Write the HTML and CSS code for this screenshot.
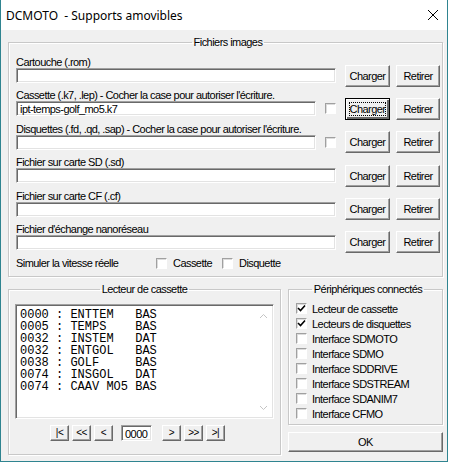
FILE: index.html
```html
<html>

<head>
    <link rel="stylesheet" href="styles.css">
</head>

<body>

    <div class="window">
        <div class="titlebar">
            <span class="title">DCMOTO&nbsp; - Supports amovibles</span>
            <svg class="close" width="12" height="12" viewBox="0 0 12 12">
                <path d="M1 1 L11 11 M11 1 L1 11" stroke="#000" stroke-width="1" fill="none" />
            </svg>
        </div>

        <div class="client">

            <fieldset class="group files">
                <legend>Fichiers images</legend>

                <div class="file-row">
                    <div class="label">Cartouche (.rom)</div>
                    <div class="fields">
                        <div class="textbox wide"></div>
                        <button class="btn charger">Charger</button>
                        <button class="btn retirer">Retirer</button>
                    </div>
                </div>

                <div class="file-row">
                    <div class="label">Cassette (.k7, .lep) - Cocher la case pour autoriser l'écriture.</div>
                    <div class="fields">
                        <div class="textbox short">ipt-temps-golf_mo5.k7</div>
                        <span class="check"></span>
                        <button class="btn charger default"><span class="focus">Charger</span></button>
                        <button class="btn retirer">Retirer</button>
                    </div>
                </div>

                <div class="file-row">
                    <div class="label">Disquettes (.fd, .qd, .sap) - Cocher la case pour autoriser l'écriture.</div>
                    <div class="fields">
                        <div class="textbox short"></div>
                        <span class="check"></span>
                        <button class="btn charger">Charger</button>
                        <button class="btn retirer">Retirer</button>
                    </div>
                </div>

                <div class="file-row">
                    <div class="label">Fichier sur carte SD (.sd)</div>
                    <div class="fields">
                        <div class="textbox wide"></div>
                        <button class="btn charger">Charger</button>
                        <button class="btn retirer">Retirer</button>
                    </div>
                </div>

                <div class="file-row">
                    <div class="label">Fichier sur carte CF (.cf)</div>
                    <div class="fields">
                        <div class="textbox wide"></div>
                        <button class="btn charger">Charger</button>
                        <button class="btn retirer">Retirer</button>
                    </div>
                </div>

                <div class="file-row">
                    <div class="label">Fichier d'échange nanoréseau</div>
                    <div class="fields">
                        <div class="textbox wide"></div>
                        <button class="btn charger">Charger</button>
                        <button class="btn retirer">Retirer</button>
                    </div>
                </div>

                <div class="simulate">
                    <span class="sim-label">Simuler la vitesse réelle</span>
                    <span class="check"></span>
                    <span class="sim-opt">Cassette</span>
                    <span class="check"></span>
                    <span class="sim-opt">Disquette</span>
                </div>
            </fieldset>

            <div class="bottom">
                <fieldset class="group tape">
                    <legend>Lecteur de cassette</legend>

                    <div class="listbox">
                        <pre class="entries">0000 : ENTTEM   BAS
0005 : TEMPS    BAS
0032 : INSTEM   DAT
0032 : ENTGOL   BAS
0038 : GOLF     BAS
0074 : INSGOL   DAT
0074 : CAAV MO5 BAS</pre>
                        <div class="scrollbar">
                            <svg width="9" height="6" viewBox="0 0 9 6">
                                <path d="M1 5 L4.5 1.5 L8 5" stroke="#c4c4c4" fill="none" />
                            </svg>
                            <svg width="9" height="6" viewBox="0 0 9 6">
                                <path d="M1 1 L4.5 4.5 L8 1" stroke="#c4c4c4" fill="none" />
                            </svg>
                        </div>
                    </div>

                    <div class="nav">
                        <button class="btn nav-btn">|&lt;</button>
                        <button class="btn nav-btn">&lt;&lt;</button>
                        <button class="btn nav-btn">&lt;</button>
                        <div class="textbox counter">0000</div>
                        <button class="btn nav-btn">&gt;</button>
                        <button class="btn nav-btn">&gt;&gt;</button>
                        <button class="btn nav-btn">&gt;|</button>
                    </div>
                </fieldset>

                <div class="side">
                    <fieldset class="group devices">
                        <legend>Périphériques connectés</legend>
                        <div class="device"><span class="check checked"><svg width="9" height="9" viewBox="0 0 9 9"><path d="M1 4 L3.5 6.5 L8 1.5" stroke="#000" stroke-width="1.6" fill="none" /></svg></span>Lecteur de cassette</div>
                        <div class="device"><span class="check checked"><svg width="9" height="9" viewBox="0 0 9 9"><path d="M1 4 L3.5 6.5 L8 1.5" stroke="#000" stroke-width="1.6" fill="none" /></svg></span>Lecteurs de disquettes</div>
                        <div class="device"><span class="check"></span>Interface SDMOTO</div>
                        <div class="device"><span class="check"></span>Interface SDMO</div>
                        <div class="device"><span class="check"></span>Interface SDDRIVE</div>
                        <div class="device"><span class="check"></span>Interface SDSTREAM</div>
                        <div class="device"><span class="check"></span>Interface SDANIM7</div>
                        <div class="device"><span class="check"></span>Interface CFMO</div>
                    </fieldset>

                    <button class="btn ok">OK</button>
                </div>
            </div>

        </div>
    </div>

</body>

</html>
```

FILE: styles.css
```css
body {
    margin: 0;
    background-color: #fff;
    font-family: "Liberation Sans", Arial, sans-serif;
    font-size: 11px;
    letter-spacing: -0.55px;
    color: #000;
}

.window {
    width: 446px;
    height: 461px;
    border: 1px solid #2f8490;
    border-top: none;
}

.titlebar {
    height: 30px;
    background-color: #fff;
    display: flex;
    align-items: center;
    justify-content: space-between;
    padding: 0 8px 0 5px;
}

.title {
    font-family: "Noto Sans", sans-serif;
    font-size: 12px;
    letter-spacing: 0;
}

.client {
    height: 431px;
    background-color: #f0f0f0;
    padding: 0 4px 0 7px;
    box-sizing: border-box;
    overflow: hidden;
}

/* Group boxes */
.group {
    margin: 0;
    border: 1px solid #c8c8c8;
    box-shadow: inset 1px 1px #fff, 1px 1px #fff;
    padding: 0;
}

.group legend {
    margin: 0 auto;
    padding: 0 2px;
    line-height: 12px;
}

.files {
    margin-top: 6px;
    padding: 8px 2px 6px 7px;
}

.file-row {
    height: 33.4px;
}

.label {
    line-height: 12px;
    height: 12px;
    white-space: nowrap;
}

.fields {
    display: flex;
    align-items: center;
    height: 15px;
}

/* Sunken text box */
.textbox {
    height: 15px;
    box-sizing: border-box;
    background-color: #fff;
    border: 1px solid;
    border-color: #a0a0a0 #fff #fff #a0a0a0;
    box-shadow: inset 1px 1px #696969, inset -1px -1px #e3e3e3;
    padding: 1px 0 0 3px;
    line-height: 12px;
    white-space: nowrap;
}

.textbox.wide {
    width: 320px;
}

.textbox.short {
    width: 300px;
}

.check {
    display: inline-flex;
    align-items: center;
    justify-content: center;
    width: 11px;
    height: 11px;
    box-sizing: border-box;
    background-color: #fff;
    border: 1px solid;
    border-color: #a0a0a0 #fff #fff #a0a0a0;
    box-shadow: inset 1px 1px #dcdcdc;
    flex-shrink: 0;
}

.fields .check {
    margin-left: 9px;
}

/* Raised push button */
.btn {
    font-family: "Liberation Sans", Arial, sans-serif;
    font-size: 11px;
    letter-spacing: -0.55px;
    color: #000;
    background-color: #f0f0f0;
    border: 1px solid;
    border-color: #fff #696969 #696969 #fff;
    box-shadow: inset -1px -1px #a0a0a0;
    padding: 0;
    flex-shrink: 0;
}

.charger {
    width: 45px;
    height: 22px;
    margin-left: 9px;
}

.retirer {
    width: 44px;
    height: 22px;
    margin-left: 6px;
}

.btn.default {
    border-color: #000;
    box-shadow: inset 1px 1px #fff, inset -2px -2px #696969;
}

.focus {
    outline: 1px dotted #000;
    outline-offset: 0;
}

.simulate {
    display: flex;
    align-items: center;
    height: 14px;
}

.sim-label {
    width: 140px;
}

.sim-opt {
    margin-left: 6px;
    width: 49px;
}

/* Bottom part */
.bottom {
    display: flex;
    gap: 7px;
    margin-top: 6px;
}

.tape {
    width: 273px;
    box-sizing: border-box;
    padding: 9px 6px 13px 6px;
}

.listbox {
    display: flex;
    height: 115px;
    box-sizing: border-box;
    background-color: #fff;
    border: 1px solid;
    border-color: #a0a0a0 #fff #fff #a0a0a0;
    box-shadow: inset 1px 1px #696969, inset -1px -1px #e3e3e3;
}

.entries {
    flex: 1;
    margin: 0;
    padding: 4px 0 0 4px;
    font-family: "Liberation Mono", "Courier New", monospace;
    font-size: 12px;
    line-height: 12px;
    letter-spacing: 0;
}

.scrollbar {
    width: 17px;
    display: flex;
    flex-direction: column;
    justify-content: space-between;
    align-items: center;
    padding: 8px 0 7px;
    margin-right: 1px;
}

.nav {
    display: flex;
    align-items: center;
    height: 16px;
    margin-top: 6px;
    padding-left: 35px;
}

.nav-btn {
    width: 19px;
    height: 16px;
    margin-right: 3px;
    font-size: 10px;
    line-height: 10px;
}

.textbox.counter {
    width: 31px;
    height: 16px;
    margin: 0 10px 0 5px;
    padding-top: 2px;
}

.side {
    width: 155px;
}

.devices {
    padding: 6px 2px 3px 7px;
}

.device {
    display: flex;
    align-items: center;
    height: 15px;
    white-space: nowrap;
}

.device .check {
    margin-right: 5px;
}

.ok {
    display: block;
    width: 155px;
    height: 20px;
    margin-top: 7px;
}
```
